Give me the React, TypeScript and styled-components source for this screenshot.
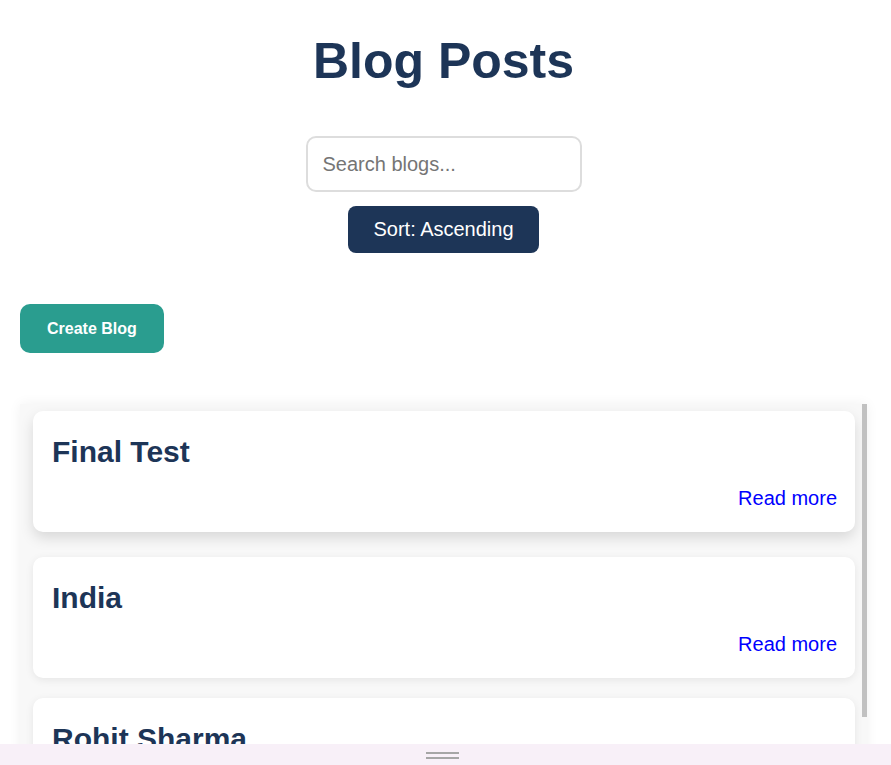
import React from "react";
import styled, { createGlobalStyle } from "styled-components";

const GlobalStyle = createGlobalStyle`
  html, body {
    margin: 0;
    padding: 0;
    background: #ffffff;
    font-family: "Liberation Sans", Arial, Helvetica, sans-serif;
  }
  * { box-sizing: border-box; }
`;

const Page = styled.div`
  padding: 32px 24px 0 20px;
  display: flex;
  flex-direction: column;
`;

const Title = styled.h1`
  margin: 0;
  text-align: center;
  font-size: 50px;
  font-weight: 700;
  color: #1d3557;
`;

const Controls = styled.div`
  margin-top: 46px;
  display: flex;
  flex-direction: column;
  align-items: center;
  gap: 14px;
`;

const SearchInput = styled.input`
  width: 276px;
  height: 56px;
  padding: 0 15px;
  border: 2px solid #dddddd;
  border-radius: 10px;
  font-family: inherit;
  font-size: 20px;
  color: #333;
  outline: none;
  &::placeholder {
    color: #757575;
  }
`;

const SortButton = styled.button`
  padding: 12px 25px;
  border: none;
  border-radius: 8px;
  background: #1d3557;
  color: #ffffff;
  font-family: inherit;
  font-size: 20px;
  line-height: 23px;
  cursor: pointer;
`;

const ActionRow = styled.div`
  margin-top: 51px;
  display: flex;
`;

const CreateButton = styled.button`
  padding: 15px 27px;
  border: none;
  border-radius: 10px;
  background: #2a9d8f;
  color: #ffffff;
  font-family: inherit;
  font-size: 16px;
  font-weight: 700;
  line-height: 19px;
  cursor: pointer;
`;

const ListFrame = styled.div`
  position: relative;
  margin-top: 51px;
  height: 361px;
  background: #f8f8f8;
  box-shadow: 0 0 12px rgba(0, 0, 0, 0.06);
  overflow: hidden;
`;

const List = styled.div`
  height: 100%;
  overflow: hidden;
  padding: 12px 12px 6px 13px;
  display: flex;
  flex-direction: column;
  gap: 20px;
`;

const ScrollThumb = styled.div`
  position: absolute;
  top: 0;
  right: 0;
  width: 5px;
  height: 313px;
  background: #c1c1c1;
`;

const Card = styled.div<{ $raised?: boolean }>`
  flex: 0 0 auto;
  background: #ffffff;
  border-radius: 10px;
  padding: 24px 18px 22px 19px;
  box-shadow: ${(p) =>
    p.$raised ? "0 6px 14px rgba(0, 0, 0, 0.13)" : "0 2px 8px rgba(0, 0, 0, 0.08)"};
  transform: ${(p) => (p.$raised ? "translateY(-5px)" : "none")};
  display: flex;
  flex-direction: column;
`;

const CardTitle = styled.h2`
  margin: 0 0 18px;
  font-size: 30px;
  font-weight: 700;
  color: #1d3557;
`;

const ReadMore = styled.a`
  align-self: flex-end;
  font-size: 20px;
  line-height: 23px;
  color: #0000ff;
  text-decoration: none;
`;

const BottomBar = styled.div`
  position: fixed;
  left: 0;
  right: 0;
  bottom: 0;
  height: 21px;
  background: #f8f0f8;
  display: flex;
  justify-content: center;
  align-items: center;
  padding-right: 6px;
`;

const Handle = styled.div`
  width: 33px;
  display: flex;
  flex-direction: column;
  gap: 3px;
  margin-top: 1px;
`;

const HandleLine = styled.span`
  display: block;
  height: 2px;
  background: #a6a6a6;
`;

const posts = ["Final Test", "India", "Rohit Sharma"];

export default function App() {
  return (
    <>
      <GlobalStyle />
      <Page>
        <Title>Blog Posts</Title>
        <Controls>
          <SearchInput placeholder="Search blogs..." />
          <SortButton>Sort: Ascending</SortButton>
        </Controls>
        <ActionRow>
          <CreateButton>Create Blog</CreateButton>
        </ActionRow>
        <ListFrame>
          <List>
            {posts.map((t, i) => (
              <Card key={t} $raised={i === 0}>
                <CardTitle>{t}</CardTitle>
                <ReadMore href="#">Read more</ReadMore>
              </Card>
            ))}
          </List>
          <ScrollThumb />
        </ListFrame>
      </Page>
      <BottomBar>
        <Handle>
          <HandleLine />
          <HandleLine />
        </Handle>
      </BottomBar>
    </>
  );
}
